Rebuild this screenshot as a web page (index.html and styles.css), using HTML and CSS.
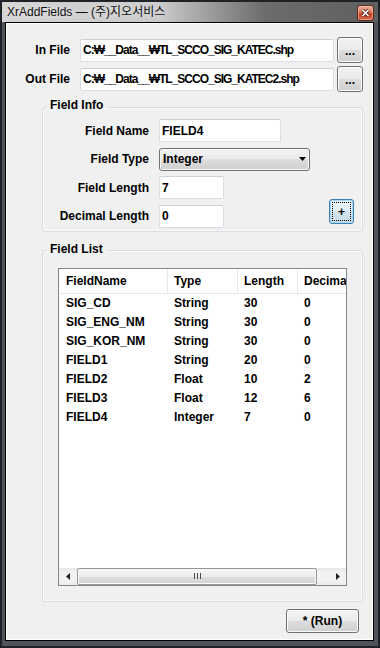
FILE: index.html
```html
<!DOCTYPE html>
<html lang="ko">
<head>
    <meta charset="UTF-8">
    <title>XrAddFields</title>
    <link rel="stylesheet" href="styles.css">
</head>
<body>
    <div class="window">
        <div class="titlebar">
            <span class="title">XrAddFields — (주)지오서비스</span>
            <span class="close">
                <svg width="9" height="8" viewBox="0 0 9 8">
                    <path d="M1.5 1l6 6M7.5 1l-6 6" stroke="#5a2418" stroke-width="3.2"/>
                    <path d="M1.5 1l6 6M7.5 1l-6 6" stroke="#fff" stroke-width="1.6"/>
                </svg>
            </span>
        </div>
        <div class="client">
            <div class="file-row">
                <label>In File</label>
                <div class="textbox path">C:₩__Data__₩TL_SCCO_SIG_KATEC.shp</div>
                <button class="btn browse">...</button>
            </div>
            <div class="file-row">
                <label>Out File</label>
                <div class="textbox path">C:₩__Data__₩TL_SCCO_SIG_KATEC2.shp</div>
                <button class="btn browse">...</button>
            </div>

            <fieldset class="group info">
                <legend>Field Info</legend>
                <div class="info-grid">
                    <label>Field Name</label>
                    <div class="textbox name">FIELD4</div>
                    <label>Field Type</label>
                    <div class="combo">
                        <span>Integer</span>
                        <svg width="7" height="4" viewBox="0 0 7 4"><path d="M0 0h7L3.5 4z" fill="#000"/></svg>
                    </div>
                    <label>Field Length</label>
                    <div class="textbox short">7</div>
                    <label>Decimal Length</label>
                    <div class="textbox short">0</div>
                    <button class="btn add">+</button>
                </div>
            </fieldset>

            <fieldset class="group list">
                <legend>Field List</legend>
                <div class="listview">
                    <div class="lv-head">
                        <div class="cell c1">FieldName</div>
                        <div class="cell c2">Type</div>
                        <div class="cell c3">Length</div>
                        <div class="cell c4">Decimal</div>
                    </div>
                    <div class="lv-body">
                        <div class="row"><div class="cell c1">SIG_CD</div><div class="cell c2">String</div><div class="cell c3">30</div><div class="cell c4">0</div></div>
                        <div class="row"><div class="cell c1">SIG_ENG_NM</div><div class="cell c2">String</div><div class="cell c3">30</div><div class="cell c4">0</div></div>
                        <div class="row"><div class="cell c1">SIG_KOR_NM</div><div class="cell c2">String</div><div class="cell c3">30</div><div class="cell c4">0</div></div>
                        <div class="row"><div class="cell c1">FIELD1</div><div class="cell c2">String</div><div class="cell c3">20</div><div class="cell c4">0</div></div>
                        <div class="row"><div class="cell c1">FIELD2</div><div class="cell c2">Float</div><div class="cell c3">10</div><div class="cell c4">2</div></div>
                        <div class="row"><div class="cell c1">FIELD3</div><div class="cell c2">Float</div><div class="cell c3">12</div><div class="cell c4">6</div></div>
                        <div class="row"><div class="cell c1">FIELD4</div><div class="cell c2">Integer</div><div class="cell c3">7</div><div class="cell c4">0</div></div>
                    </div>
                    <div class="hscroll">
                        <div class="arrow">
                            <svg width="4" height="7" viewBox="0 0 4 7"><path d="M4 0v7L0 3.5z" fill="#222"/></svg>
                        </div>
                        <div class="track">
                            <div class="thumb">
                                <svg width="7" height="6" viewBox="0 0 7 6"><path d="M.5 0v6M3.5 0v6M6.5 0v6" stroke="#4a4a4a"/></svg>
                            </div>
                        </div>
                        <div class="arrow">
                            <svg width="4" height="7" viewBox="0 0 4 7"><path d="M0 0v7L4 3.5z" fill="#222"/></svg>
                        </div>
                    </div>
                </div>
            </fieldset>

            <div class="footer">
                <button class="btn run">* (Run)</button>
            </div>
        </div>
    </div>
</body>
</html>
```

FILE: styles.css
```css
* {
    box-sizing: border-box;
}
html, body {
    margin: 0;
    width: 380px;
    height: 648px;
    background: #1f2328;
    font-family: "Liberation Sans", "Noto Sans CJK KR", sans-serif;
    font-size: 12px;
    color: #000;
}
.window {
    width: 380px;
    height: 648px;
    border: 2px solid #1e2227;
    background: #4f545a;
    display: flex;
    flex-direction: column;
}
.titlebar {
    height: 20px;
    flex: none;
    display: flex;
    justify-content: space-between;
    padding: 0 4px 0 5px;
    background: linear-gradient(to right, #d4d4d4 0%, #cacaca 42%, #9a9a9a 56%, #6c6c6c 70%, #5f5f5f 100%);
}
.title {
    line-height: 20px;
    color: #111;
    text-shadow: 0 0 6px #f2f2f2;
}
.close {
    width: 17px;
    height: 16px;
    margin-top: 3px;
    border: 1px solid #5e271c;
    border-radius: 3px;
    background: linear-gradient(#eab2a2 0%, #d9765d 45%, #c4401f 55%, #d3694d 100%);
    box-shadow: inset 0 0 0 1px rgba(255, 210, 190, 0.5);
    display: flex;
    align-items: center;
    justify-content: center;
}
.client {
    flex: 1;
    margin: 0 4px 5px 3px;
    border: 1px solid #000;
    box-shadow: inset 0 0 0 1px #fff;
    background: #f0f0f0;
    padding: 14px 10px 0 0;
    display: flex;
    flex-direction: column;
    font-weight: bold;
}
label {
    text-align: right;
}
.file-row {
    height: 26px;
    display: flex;
    align-items: center;
}
.file-row + .file-row {
    margin-top: 3px;
}
.file-row label {
    width: 64px;
    margin-right: 10px;
}
.textbox {
    height: 23px;
    background: #fff;
    border: 1px solid #dadee3;
    border-top-color: #cdd1d6;
    border-radius: 2px;
    padding: 0 2px;
    display: flex;
    align-items: center;
    white-space: nowrap;
    overflow: hidden;
}
.textbox.path {
    width: 254px;
    margin-right: 3px;
    letter-spacing: -1px;
}
.textbox.name {
    width: 122px;
}
.textbox.short {
    width: 65px;
}
.btn {
    font-family: inherit;
    font-size: 12px;
    font-weight: bold;
    color: #000;
    padding: 0;
    border: 1px solid #707070;
    border-radius: 3px;
    background: linear-gradient(#f2f2f2 0%, #ebebeb 50%, #dddddd 50%, #cfcfcf 100%);
    box-shadow: inset 0 0 0 1px #fbfbfb;
}
.btn.browse {
    width: 26px;
    height: 26px;
    padding-top: 2px;
}
.group {
    margin: 0 0 0 36px;
    border: 1px solid #d5dfe5;
    border-radius: 3px;
    box-shadow: inset 0 0 0 1px #fafafa;
    min-width: 0;
}
.group legend {
    margin-left: 4px;
    padding: 0 3px 4px;
    line-height: 14px;
}
.info {
    margin-top: 6px;
    padding: 3px 8px 3px 0;
}
.info-grid {
    display: grid;
    grid-template-columns: 106px 151px 1fr;
    grid-template-rows: repeat(4, 23px);
    column-gap: 10px;
    row-gap: 5.67px;
    align-items: center;
}
.info-grid label {
    grid-column: 1;
}
.combo {
    height: 23px;
    border: 1px solid #707070;
    border-radius: 3px;
    background: linear-gradient(#f2f2f2 0%, #ebebeb 50%, #dddddd 50%, #cfcfcf 100%);
    box-shadow: inset 0 0 0 1px #fbfbfb;
    display: flex;
    align-items: center;
    justify-content: space-between;
    padding: 0 3px 0 3px;
}
.btn.add {
    grid-column: 3;
    grid-row: 3 / 5;
    justify-self: end;
    align-self: end;
    margin-bottom: 4px;
    width: 25px;
    height: 25px;
    border-color: #3c7fb1;
    background: linear-gradient(#eef6fc 0%, #e3eef7 50%, #d5e4ef 50%, #cadce9 100%);
    box-shadow: inset 0 0 0 1px #a9dbf6;
    outline: 1px dotted #000;
    outline-offset: -4px;
    padding-top: 1px;
}
.list {
    margin-top: 10px;
    padding: 8px 15px 15px 0;
}
.listview {
    margin-left: 15px;
    height: 318px;
    border: 1px solid #828790;
    background: #fff;
    display: flex;
    flex-direction: column;
    overflow: hidden;
    font-weight: bold;
}
.lv-head {
    height: 25px;
    flex: none;
    display: flex;
    border-bottom: 1px solid #e5e7ea;
}
.lv-head .cell {
    border-right: 1px solid #e5e7ea;
    line-height: 24px;
}
.cell {
    flex: none;
    padding-left: 6px;
    white-space: nowrap;
    overflow: hidden;
}
.cell.c1 { width: 109px; padding-left: 7px; }
.cell.c2 { width: 70px; }
.cell.c3 { width: 60px; }
.cell.c4 { width: 90px; }
.lv-body {
    flex: 1;
}
.row {
    display: flex;
    height: 19px;
    line-height: 19px;
}
.hscroll {
    height: 17px;
    flex: none;
    display: flex;
    background: linear-gradient(#e6e6e6 0%, #f2f2f2 25%, #f2f2f2 75%, #e9e9e9 100%);
}
.arrow {
    width: 17px;
    flex: none;
    display: flex;
    align-items: center;
    justify-content: center;
}
.track {
    flex: 1;
    padding: 0 12px 0 1px;
    display: flex;
}
.thumb {
    flex: 1;
    border: 1px solid #979797;
    border-radius: 2px;
    background: linear-gradient(#f6f6f6 0%, #ececec 50%, #dedede 51%, #d4d4d4 100%);
    box-shadow: inset 0 0 0 1px #fafafa;
    display: flex;
    align-items: center;
    justify-content: center;
}
.footer {
    display: flex;
    justify-content: flex-end;
    margin-top: 7px;
    padding-right: 4px;
}
.btn.run {
    width: 73px;
    height: 24px;
}
```
